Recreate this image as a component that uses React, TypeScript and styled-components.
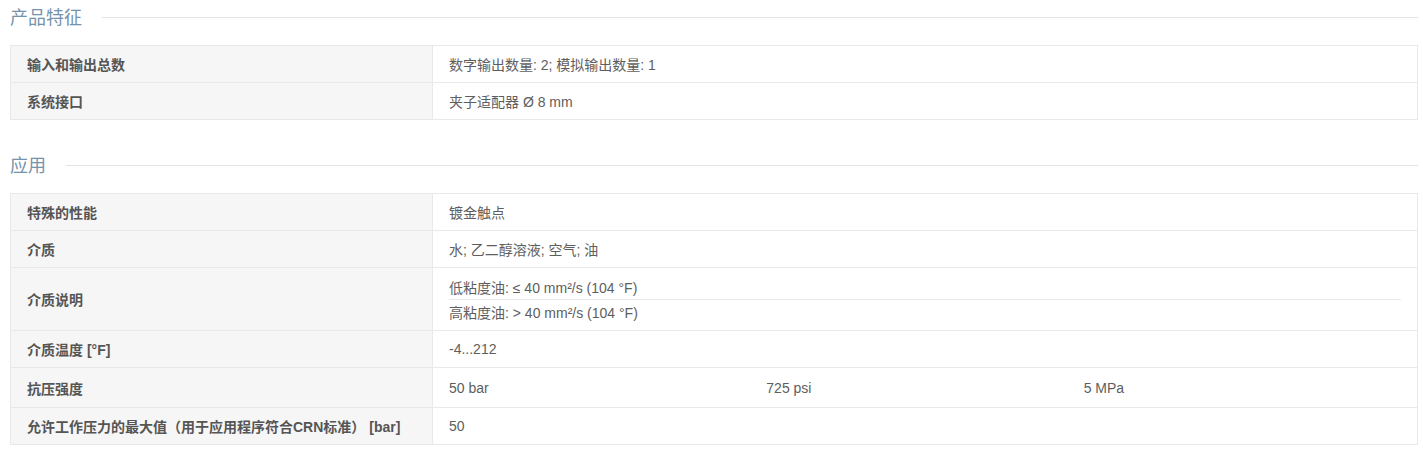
import styled, { createGlobalStyle } from 'styled-components';

const GlobalStyle = createGlobalStyle`
  body {
    margin: 0;
    background: #fff;
    font-family: 'Liberation Sans', Arial, 'Noto Sans CJK SC', sans-serif;
  }
`;

type Value = string | string[];

interface SpecRow {
  label: string;
  value: Value;
  layout?: 'lines' | 'columns';
}

interface Section {
  title: string;
  rows: SpecRow[];
}

const sections: Section[] = [
  {
    title: '产品特征',
    rows: [
      { label: '输入和输出总数', value: '数字输出数量: 2; 模拟输出数量: 1' },
      { label: '系统接口', value: '夹子适配器 Ø 8 mm' },
    ],
  },
  {
    title: '应用',
    rows: [
      { label: '特殊的性能', value: '镀金触点' },
      { label: '介质', value: '水; 乙二醇溶液; 空气; 油' },
      {
        label: '介质说明',
        value: ['低粘度油: ≤ 40 mm²/s (104 °F)', '高粘度油: > 40 mm²/s (104 °F)'],
        layout: 'lines',
      },
      { label: '介质温度 [°F]', value: '-4...212' },
      { label: '抗压强度', value: ['50 bar', '725 psi', '5 MPa'], layout: 'columns' },
      { label: '允许工作压力的最大值（用于应用程序符合CRN标准） [bar]', value: '50' },
    ],
  },
];

function App() {
  return (
    <>
      <GlobalStyle />
      <Page>
        {sections.map((section) => (
          <SectionBlock key={section.title}>
            <SectionHeader>
              <h3>{section.title}</h3>
              <span className='rule' />
            </SectionHeader>
            <SpecTable>
              {section.rows.map((row) => (
                <Row key={row.label} $tall={row.layout === 'columns'}>
                  <LabelCell>{row.label}</LabelCell>
                  {row.layout === 'lines' && Array.isArray(row.value) ? (
                    <LinesCell>
                      {row.value.map((line) => (
                        <div className='line' key={line}>
                          {line}
                        </div>
                      ))}
                    </LinesCell>
                  ) : row.layout === 'columns' && Array.isArray(row.value) ? (
                    <ColumnsCell>
                      {row.value.map((v) => (
                        <span key={v}>{v}</span>
                      ))}
                    </ColumnsCell>
                  ) : (
                    <ValueCell>{row.value}</ValueCell>
                  )}
                </Row>
              ))}
            </SpecTable>
          </SectionBlock>
        ))}
      </Page>
    </>
  );
}

const Page = styled.div`
  padding: 0 5px 0 10px;
`;

const SectionBlock = styled.section`
  margin-bottom: 28px;

  &:last-child {
    margin-bottom: 0;
  }
`;

const SectionHeader = styled.div`
  display: flex;
  align-items: center;
  gap: 20px;
  height: 35px;
  margin-bottom: 10px;

  h3 {
    margin: 0;
    font-size: 18px;
    font-weight: normal;
    line-height: 1;
    color: #7593aa;
    white-space: nowrap;
  }

  .rule {
    flex: 1;
    height: 1px;
    background: #e4e4e4;
  }
`;

const SpecTable = styled.div`
  border: 1px solid #e9e9e9;
  font-size: 14px;
  color: #555;
`;

const Row = styled.div<{ $tall?: boolean }>`
  display: grid;
  grid-template-columns: 422px 1fr;
  min-height: ${({ $tall }) => ($tall ? '39px' : '36px')};

  & + & {
    border-top: 1px solid #e9e9e9;
  }
`;

const LabelCell = styled.div`
  display: flex;
  align-items: center;
  padding: 0 16px;
  background: #f6f6f6;
  border-right: 1px solid #e9e9e9;
  font-weight: bold;
  color: #555;
`;

const ValueCell = styled.div`
  display: flex;
  align-items: center;
  padding: 0 16px;
  color: #5e5e5e;
`;

const LinesCell = styled.div`
  padding: 7px 16px 6px;
  color: #5e5e5e;

  .line {
    height: 24px;
    display: flex;
    align-items: center;
  }

  .line + .line {
    border-top: 1px solid #e9e9e9;
  }
`;

const ColumnsCell = styled.div`
  display: grid;
  grid-template-columns: repeat(3, 1fr);
  align-items: center;
  padding: 0 16px;
  color: #5e5e5e;
`;

export default App;
